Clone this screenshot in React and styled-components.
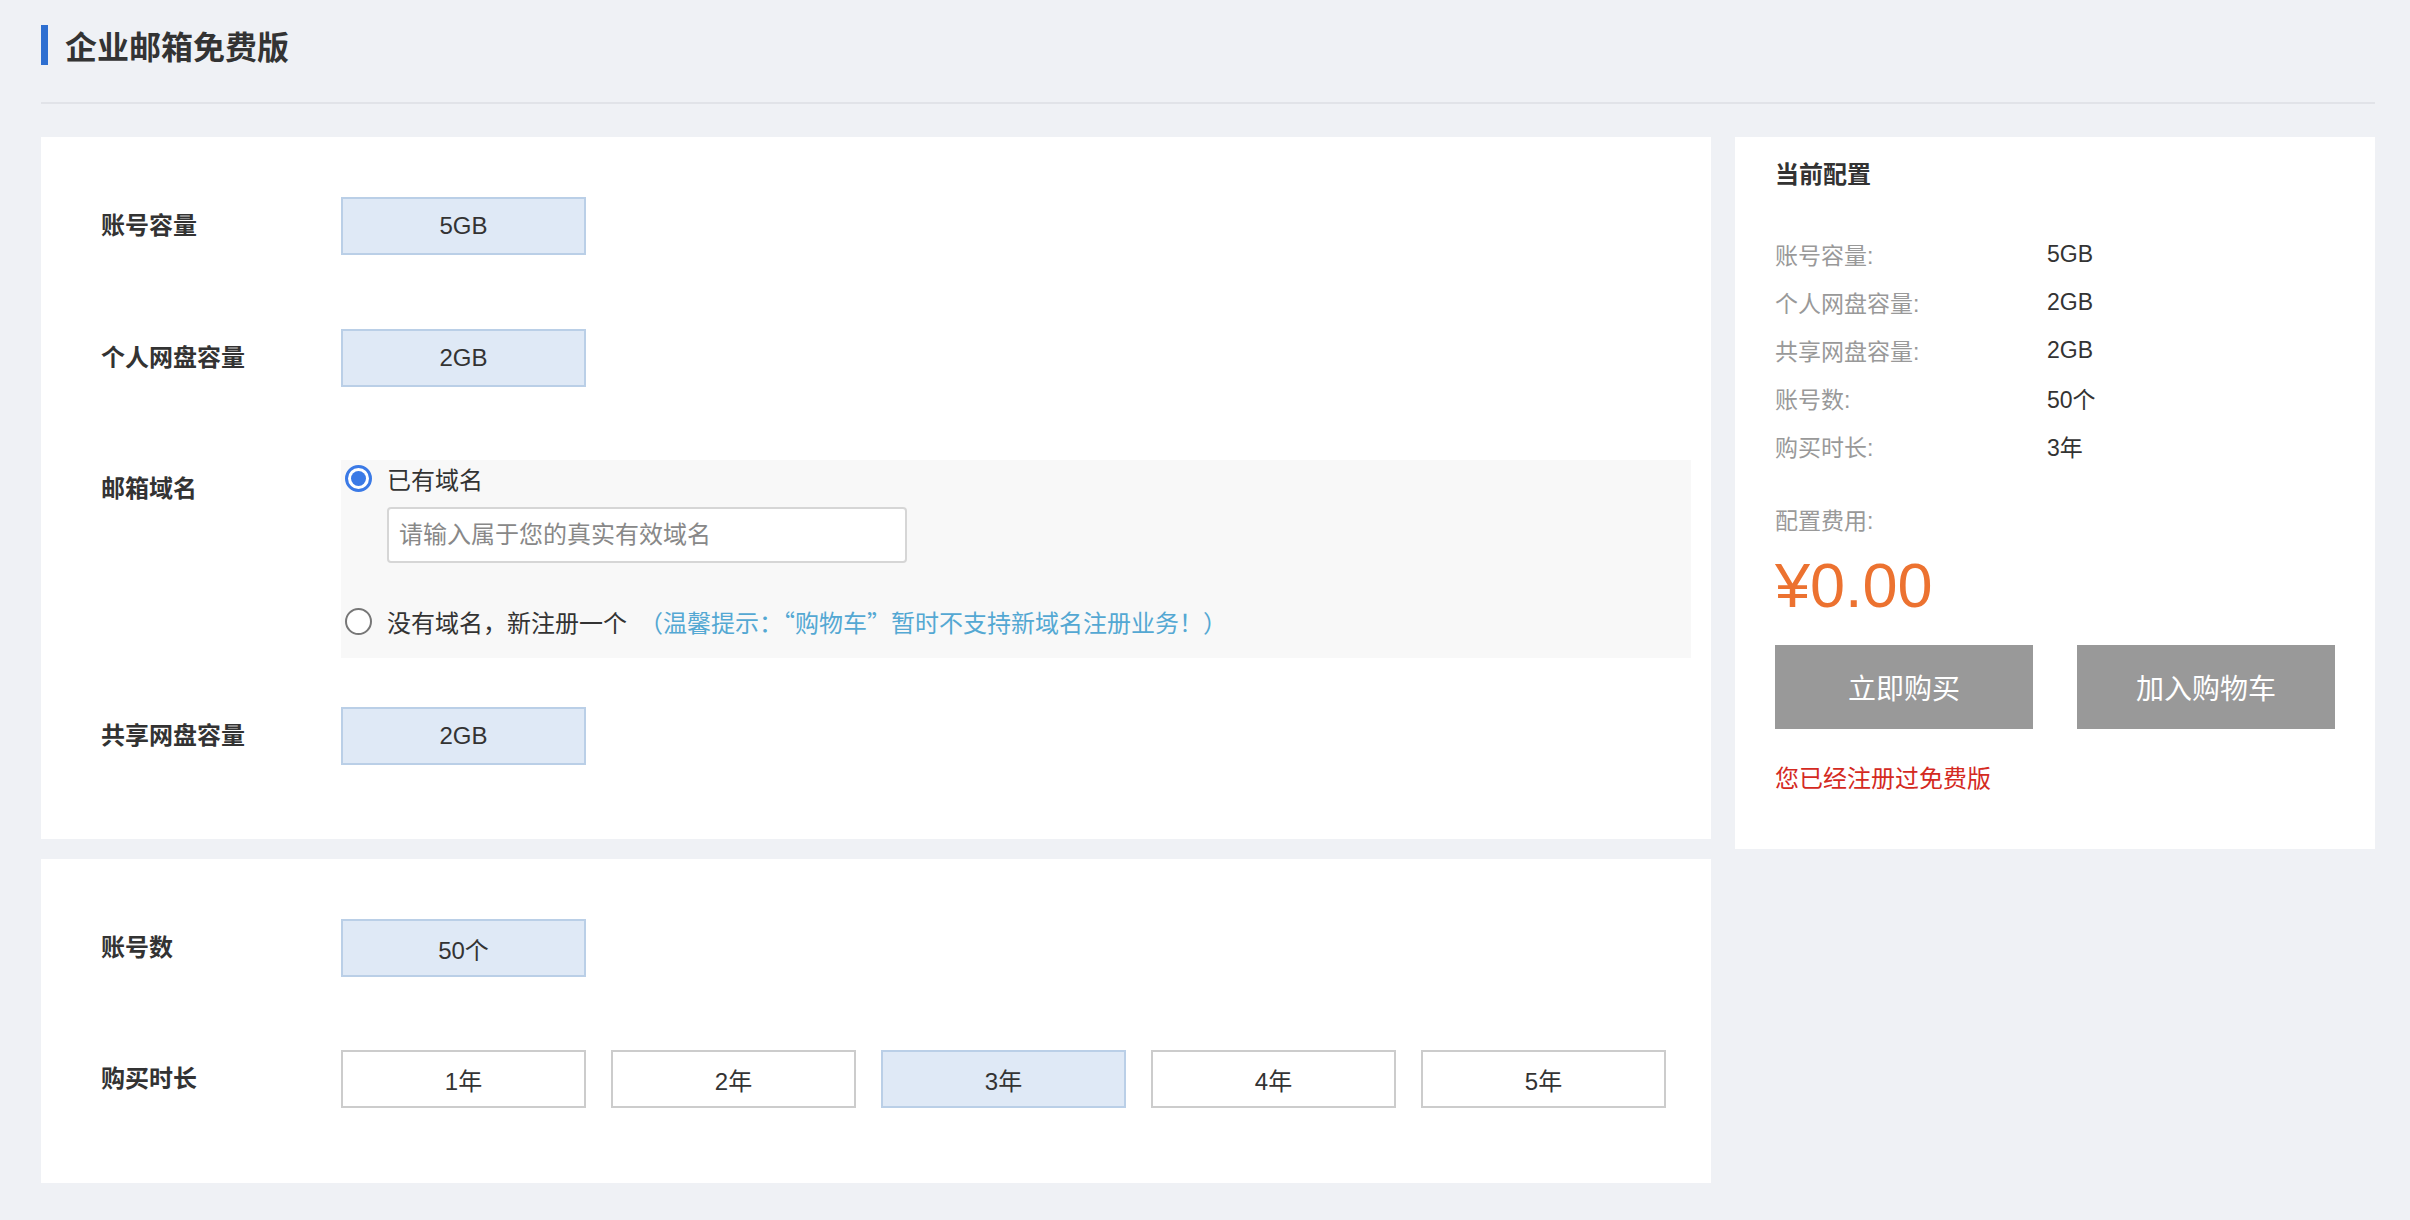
import React from 'react'
import styled, { createGlobalStyle } from 'styled-components'

const GlobalStyle = createGlobalStyle`
  body {
    margin: 0;
    background: #eff1f5;
    font-family: "Liberation Sans", "Noto Sans CJK SC", sans-serif;
    color: #333;
  }
`

const Page = styled.div`
  padding: 25px 35px 40px 41px;
`

const Header = styled.div`
  display: flex;
  align-items: center;
  height: 40px;
`

const Title = styled.h1`
  margin: 0;
  display: flex;
  align-items: center;
  font-size: 32px;
  font-weight: 700;
  color: #333;
  &::before {
    content: '';
    width: 7px;
    height: 40px;
    background: #2e6fd1;
    margin-right: 17px;
  }
`

const Divider = styled.div`
  margin-top: 37px;
  border-top: 2px solid #e1e3e8;
`

const Layout = styled.div`
  display: flex;
  gap: 24px;
  margin-top: 33px;
  align-items: flex-start;
`

const LeftCol = styled.div`
  width: 1670px;
  display: flex;
  flex-direction: column;
  gap: 20px;
`

const Card = styled.div`
  background: #fff;
  padding: 60px 20px ${(p) => p.$bottom || 74}px 60px;
`

const Row = styled.div`
  display: flex;
  align-items: flex-start;
  margin-top: ${(p) => p.$gap || 0}px;
`

const Label = styled.div`
  width: 240px;
  flex-shrink: 0;
  height: 58px;
  line-height: 58px;
  font-size: 24px;
  font-weight: 700;
  color: #333;
`

const Options = styled.div`
  display: flex;
  gap: 25px;
`

const Option = styled.div`
  width: 245px;
  height: 58px;
  box-sizing: border-box;
  display: flex;
  align-items: center;
  justify-content: center;
  font-size: 24px;
  color: #333;
  background: ${(p) => (p.$active ? '#dfe9f6' : '#fff')};
  border: 2px solid ${(p) => (p.$active ? '#bacfe7' : '#cccccc')};
`

const DomainBox = styled.div`
  flex: 1;
  background: #f8f8f8;
  padding: 0 0 19px 4px;
`

const RadioLine = styled.label`
  display: flex;
  align-items: center;
  height: 36px;
  font-size: 24px;
  color: #333;
  margin-top: ${(p) => p.$gap || 0}px;
`

const Radio = styled.span`
  width: 27px;
  height: 27px;
  box-sizing: border-box;
  border-radius: 50%;
  border: ${(p) => (p.$checked ? '3px solid #3b7ae6' : '2px solid #777')};
  margin-right: 15px;
  flex-shrink: 0;
  display: flex;
  align-items: center;
  justify-content: center;
  background: #fff;
  &::after {
    content: '';
    display: ${(p) => (p.$checked ? 'block' : 'none')};
    width: 15px;
    height: 15px;
    border-radius: 50%;
    background: #3b7ae6;
  }
`

const DomainInput = styled.input`
  display: block;
  margin: 11px 0 0 42px;
  width: 520px;
  height: 56px;
  box-sizing: border-box;
  border: 2px solid #d6d6d6;
  border-radius: 4px;
  padding: 0 10px;
  font-size: 24px;
  font-family: inherit;
  outline: none;
  &::placeholder {
    color: #888;
  }
`

const Hint = styled.span`
  margin-left: 12px;
  color: #54a8d3;
  font-family: "Noto Sans CJK SC", sans-serif;
`

const Side = styled.div`
  width: 640px;
  box-sizing: border-box;
  background: #fff;
  padding: 20px 40px 52px;
`

const SideTitle = styled.div`
  font-size: 24px;
  font-weight: 700;
  line-height: 36px;
  color: #333;
`

const SpecList = styled.div`
  margin-top: 37px;
  display: flex;
  flex-direction: column;
`

const Spec = styled.div`
  display: flex;
  height: 48px;
  align-items: center;
  font-size: 23px;
`

const SpecKey = styled.span`
  width: 272px;
  color: #999;
`

const SpecVal = styled.span`
  color: #333;
`

const CostLabel = styled.div`
  margin-top: 27px;
  font-size: 23px;
  line-height: 48px;
  color: #999;
`

const Price = styled.div`
  margin-top: 3px;
  font-size: 63px;
  line-height: 74px;
  color: #ec7230;
  font-family: "Liberation Sans", sans-serif;
`

const Buttons = styled.div`
  margin-top: 23px;
  display: grid;
  grid-template-columns: 258px 258px;
  justify-content: space-between;
`

const Button = styled.button`
  height: 84px;
  border: none;
  background: #999;
  color: #fff;
  font-size: 28px;
  font-family: inherit;
`

const Notice = styled.div`
  margin-top: 32px;
  line-height: 36px;
  font-size: 24px;
  color: #d42a1f;
`

const specs = [
  ['账号容量:', '5GB'],
  ['个人网盘容量:', '2GB'],
  ['共享网盘容量:', '2GB'],
  ['账号数:', '50个'],
  ['购买时长:', '3年'],
]

const years = ['1年', '2年', '3年', '4年', '5年']

export default function App() {
  return (
    <Page>
      <GlobalStyle />
      <Header>
        <Title>企业邮箱免费版</Title>
      </Header>
      <Divider />
      <Layout>
        <LeftCol>
          <Card>
            <Row>
              <Label>账号容量</Label>
              <Option $active>5GB</Option>
            </Row>
            <Row $gap={74}>
              <Label>个人网盘容量</Label>
              <Option $active>2GB</Option>
            </Row>
            <Row $gap={73}>
              <Label>邮箱域名</Label>
              <DomainBox>
                <RadioLine>
                  <Radio $checked />
                  已有域名
                </RadioLine>
                <DomainInput placeholder="请输入属于您的真实有效域名" />
                <RadioLine $gap={40}>
                  <Radio />
                  没有域名，新注册一个
                  <Hint>（温馨提示：“购物车”暂时不支持新域名注册业务！）</Hint>
                </RadioLine>
              </DomainBox>
            </Row>
            <Row $gap={49}>
              <Label>共享网盘容量</Label>
              <Option $active>2GB</Option>
            </Row>
          </Card>
          <Card $bottom={75}>
            <Row>
              <Label>账号数</Label>
              <Option $active>50个</Option>
            </Row>
            <Row $gap={73}>
              <Label>购买时长</Label>
              <Options>
                {years.map((y) => (
                  <Option key={y} $active={y === '3年'}>
                    {y}
                  </Option>
                ))}
              </Options>
            </Row>
          </Card>
        </LeftCol>
        <Side>
          <SideTitle>当前配置</SideTitle>
          <SpecList>
            {specs.map(([k, v]) => (
              <Spec key={k}>
                <SpecKey>{k}</SpecKey>
                <SpecVal>{v}</SpecVal>
              </Spec>
            ))}
          </SpecList>
          <CostLabel>配置费用:</CostLabel>
          <Price>¥0.00</Price>
          <Buttons>
            <Button>立即购买</Button>
            <Button>加入购物车</Button>
          </Buttons>
          <Notice>您已经注册过免费版</Notice>
        </Side>
      </Layout>
    </Page>
  )
}
